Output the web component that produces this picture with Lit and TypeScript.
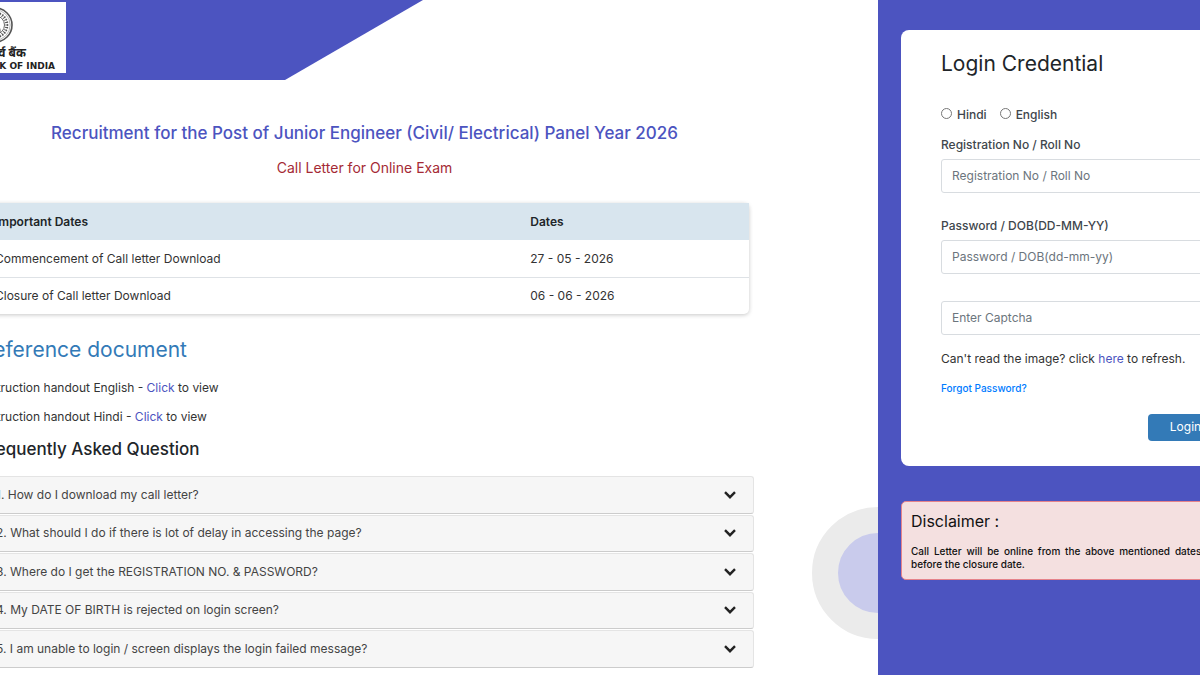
import { LitElement, html, css, svg } from "lit";
import { customElement } from "lit/decorators.js";

const DATES = [
  ["Commencement of Call letter Download", "27 - 05 - 2026"],
  ["Closure of Call letter Download", "06 - 06 - 2026"],
];

const QUESTIONS = [
  "1. How do I download my call letter?",
  "2. What should I do if there is lot of delay in accessing the page?",
  "3. Where do I get the REGISTRATION NO. & PASSWORD?",
  "4. My DATE OF BIRTH is rejected on login screen?",
  "5. I am unable to login / screen displays the login failed message?",
];

@customElement("bank-logo")
export class BankLogo extends LitElement {
  static styles = css`
    :host {
      display: flex;
      flex-direction: column;
      align-items: flex-end;
      box-sizing: border-box;
      width: 142px;
      height: 71px;
      padding: 5px 11px 0 0;
      background: #fff;
      color: #222;
      white-space: nowrap;
    }
    .seal {
      width: 36px;
      height: 36px;
      flex: none;
      margin-right: 42px;
    }
    .hindi {
      font: bold 12px/14px "Noto Sans Devanagari", "Noto Sans", sans-serif;
      margin: 4px 29px 0 0;
    }
    .english {
      font: bold 9px/10px "DejaVu Sans", sans-serif;
    }
  `;

  render() {
    const dots = Array.from({ length: 28 }, (_, i) => i * (360 / 28));
    return html`
      <svg class="seal" viewBox="0 0 36 36" fill="none" stroke="#555" aria-hidden="true">
        <circle cx="18" cy="18" r="17" stroke-width="1.6" />
        <circle cx="18" cy="18" r="15.2" stroke="#999" stroke-width=".7" />
        <circle cx="18" cy="18" r="9.5" stroke-width=".9" />
        ${dots.map((a) => svg`<path d="M18 4.5v3.2m-.9-2.2h1.8" stroke-width="1" transform="rotate(${a} 18 18)" />`)}
        <path d="M12 24h12M14 23l2-5 5-1 2 6M18 17v-5m0 0-4 2m4-2 4 2m-4-2-2-3m2 3 2-3" stroke-width="1.2" />
      </svg>
      <span class="hindi">भारतीय रिज़र्व बैंक</span>
      <span class="english">RESERVE BANK OF INDIA</span>
    `;
  }
}

@customElement("app-root")
export class AppRoot extends LitElement {
  static styles = css`
    :host {
      display: block;
      overflow: hidden;
      background: #fff;
      color: #333;
      font: 12px/20px Inter, sans-serif;
    }
    *,
    *::before {
      box-sizing: border-box;
    }
    h1,
    h2,
    h3,
    p {
      margin: 0;
      font-weight: 400;
    }
    a {
      color: #4c54c0;
      text-decoration: none;
    }
    .page {
      display: grid;
      grid-template-columns: minmax(0, 1fr) 406px;
      min-height: 100vh;
      margin: 0 -84px;
    }
    .main {
      position: relative;
      overflow: hidden;
    }
    .banner {
      width: 507px;
      height: 80px;
      padding: 2px 8px;
      background: #4c54c0;
      clip-path: polygon(0 0, 100% 0, calc(100% - 138px) 100%, 0 100%);
    }
    .orb {
      position: absolute;
      top: 507px;
      right: -66px;
      width: 132px;
      height: 132px;
      border: 26px solid #ebebeb;
      border-radius: 50%;
      background: #c9cbec;
    }
    .content {
      padding: 39px 124px 7px 59px;
    }
    .block {
      padding: 0 5px;
    }
    .title {
      font-size: 17px;
      font-weight: 500;
      line-height: 28px;
      color: #4c54c0;
      text-align: center;
    }
    .subtitle {
      margin-top: 11px;
      font-size: 14px;
      line-height: 20px;
      color: #a52a35;
      text-align: center;
    }
    .dates {
      width: 100%;
      margin-top: 25px;
      border-spacing: 0;
      border-radius: 5px;
      box-shadow: 0 1px 4px rgba(0, 0, 0, 0.22);
      table-layout: fixed;
    }
    .dates th,
    .dates td {
      height: 37px;
      padding: 0 12px;
      text-align: left;
    }
    .dates th:first-child,
    .dates td:first-child {
      padding-left: 15px;
    }
    .dates th {
      background: #d8e5ee;
      color: #212529;
      font-weight: 600;
    }
    .dates th:first-child {
      width: 70%;
    }
    .dates tr + tr td {
      border-top: 1px solid #dee2e6;
    }
    .reference {
      margin-top: 21px;
      font-size: 21px;
      line-height: 30px;
      color: #337ab7;
    }
    .handouts {
      display: grid;
      gap: 9px;
      margin: 13px 0 0;
      padding: 0;
      list-style: none;
      line-height: 20px;
    }
    .faq-title {
      margin-top: 8px;
      font-size: 17px;
      font-weight: 500;
      line-height: 28px;
      color: #212529;
    }
    .faq {
      display: grid;
      gap: 1px;
      margin-top: 13px;
    }
    .question {
      display: flex;
      align-items: center;
      justify-content: space-between;
      width: 100%;
      padding: 8px 17px 8px 20px;
      border: 1px solid #e4e4e4;
      border-bottom-color: #ccc;
      border-radius: 3px;
      background: #f6f6f6;
      color: #444;
      font: inherit;
      line-height: 1.5;
      min-height: 3.125em;
      text-align: left;
    }
    .chevron {
      width: 12px;
      height: 8px;
      fill: none;
      stroke: #222;
      stroke-width: 2.4;
    }
    .side {
      display: flex;
      flex-direction: column;
      gap: 35px;
      padding: 30px 21px 30px 23px;
      background: #4c54c0;
    }
    .card {
      display: flex;
      flex-direction: column;
      padding: 19px 40px 25px 40px;
      border-radius: 8px;
      background: #fff;
    }
    .card-title {
      margin-bottom: 25px;
      font-size: 21px;
      line-height: 30px;
      color: #212529;
    }
    .languages {
      display: flex;
      gap: 13px;
      margin-bottom: 9px;
    }
    .language {
      display: flex;
      gap: 5px;
      line-height: 22px;
    }
    .radio {
      width: 11px;
      height: 11px;
      margin: 4px 0 0;
    }
    .field {
      display: grid;
      gap: 4px;
      margin-bottom: 23px;
      line-height: 20px;
    }
    .language,
    .field {
      color: #40464c;
      font-weight: 500;
    }
    .input {
      width: 100%;
      height: 34px;
      padding: 0 10px 2px;
      border: 1px solid #d8dce0;
      border-radius: 3px;
      background: #fff;
      color: #495057;
      font: inherit;
      font-weight: 400;
    }
    .input::placeholder {
      color: #6c757d;
      opacity: 1;
    }
    .captcha {
      margin: 4px 0 14px;
    }
    .forgot {
      align-self: flex-start;
      margin: 11px 0 18px;
      color: #007bff;
      font-size: 10px;
      font-weight: 500;
      line-height: 16px;
    }
    .login {
      align-self: flex-end;
      width: 75px;
      height: 27px;
      padding: 0 0 2px;
      border: 0;
      border-radius: 4px;
      background: #337ab7;
      color: #fff;
      font: 12px Inter, sans-serif;
    }
    .disclaimer {
      padding: 7px 9px 8px;
      border: 1px solid #e5838b;
      border-radius: 5px;
      background: #f4e0e0;
      color: #111;
    }
    .disclaimer-title {
      margin-bottom: 12px;
      font-size: 16px;
      line-height: 24px;
    }
    .disclaimer-text {
      font-size: 10px;
      font-weight: 500;
      line-height: 13px;
      text-align: justify;
    }
  `;

  render() {
    return html`
      <div class="page">
        <main class="main">
          <div class="orb"></div>
          <header class="banner"><bank-logo></bank-logo></header>
          <div class="content">
            <div class="block">
              <h1 class="title">Recruitment for the Post of Junior Engineer (Civil/ Electrical) Panel Year 2026</h1>
              <p class="subtitle">Call Letter for Online Exam</p>
              <table class="dates">
                <thead>
                  <tr><th scope="col">Important Dates</th><th scope="col">Dates</th></tr>
                </thead>
                <tbody>
                  ${DATES.map(([event, date]) => html`<tr><td>${event}</td><td>${date}</td></tr>`)}
                </tbody>
              </table>
              <h2 class="reference">Reference document</h2>
              <ul class="handouts">
                ${["English", "Hindi"].map(
                  (lang) => html`<li>Instruction handout ${lang} - <a href="#">Click</a> to view</li>`
                )}
              </ul>
              <h2 class="faq-title">Frequently Asked Question</h2>
            </div>
            <div class="faq">
              ${QUESTIONS.map(
                (q) => html`<button class="question" type="button" aria-expanded="false">
                  <span>${q}</span>
                  <svg class="chevron" viewBox="0 0 12 8" aria-hidden="true"><path d="M1 1.2 6 6.2 11 1.2" /></svg>
                </button>`
              )}
            </div>
          </div>
        </main>
        <aside class="side">
          <form class="card">
            <h2 class="card-title">Login Credential</h2>
            <div class="languages">
              <label class="language"><input class="radio" type="radio" name="lang" value="hi" />Hindi</label>
              <label class="language"><input class="radio" type="radio" name="lang" value="en" />English</label>
            </div>
            <label class="field">
              Registration No / Roll No
              <input class="input" type="text" placeholder="Registration No / Roll No" />
            </label>
            <label class="field">
              Password / DOB(DD-MM-YY)
              <input class="input" type="password" placeholder="Password / DOB(dd-mm-yy)" />
            </label>
            <input class="input captcha" type="text" aria-label="Enter Captcha" placeholder="Enter Captcha" />
            <p>Can't read the image? click <a href="#">here</a> to refresh.</p>
            <a class="forgot" href="#">Forgot Password?</a>
            <button class="login" type="button">Login</button>
          </form>
          <section class="disclaimer">
            <h3 class="disclaimer-title">Disclaimer :</h3>
            <p class="disclaimer-text">
              Call Letter will be online from the above mentioned dates and open before&nbsp;the closure date.
            </p>
          </section>
        </aside>
      </div>
    `;
  }
}
